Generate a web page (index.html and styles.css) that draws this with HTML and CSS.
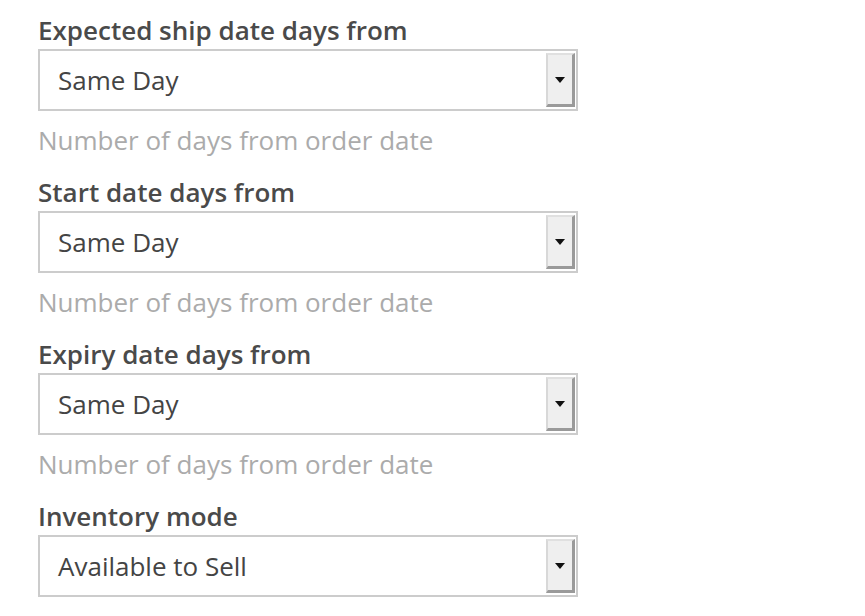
FILE: index.html
```html
<!DOCTYPE html>
<html>
<head>
<meta charset="utf-8">
<link rel="stylesheet" href="styles.css">
</head>
<body>
<div class="form">
  <div class="field">
    <div class="label">Expected ship date days from</div>
    <div class="select"><span class="value">Same Day</span><span class="btn"><span class="arrow"></span></span></div>
    <div class="help">Number of days from order date</div>
  </div>
  <div class="field">
    <div class="label">Start date days from</div>
    <div class="select"><span class="value">Same Day</span><span class="btn"><span class="arrow"></span></span></div>
    <div class="help">Number of days from order date</div>
  </div>
  <div class="field">
    <div class="label">Expiry date days from</div>
    <div class="select"><span class="value">Same Day</span><span class="btn"><span class="arrow"></span></span></div>
    <div class="help">Number of days from order date</div>
  </div>
  <div class="field">
    <div class="label">Inventory mode</div>
    <div class="select"><span class="value">Available to Sell</span><span class="btn"><span class="arrow"></span></span></div>
  </div>
</div>
</body>
</html>
```

FILE: styles.css
```css
html, body {
  margin: 0;
  padding: 0;
  background: #fff;
}
body {
  font-family: "Open Sans", "Liberation Sans", sans-serif;
  overflow: hidden;
}
.form {
  padding: 13px 0 0 38px;
  display: flex;
  flex-direction: column;
  gap: 18px;
}
.field {
  display: flex;
  flex-direction: column;
  width: 540px;
}
.label {
  font-size: 26px;
  line-height: 34px;
  font-weight: 600;
  color: #4a4a4a;
  margin-bottom: 2px;
}
.select {
  box-sizing: border-box;
  height: 62px;
  border: 2px solid #cccccc;
  background: #fff;
  display: flex;
  align-items: stretch;
  padding: 2px 1px 2px 0;
}
.value {
  flex: 1;
  display: flex;
  align-items: center;
  padding-left: 18px;
  font-size: 26px;
  color: #444;
}
.btn {
  box-sizing: border-box;
  width: 29px;
  background: #efefef;
  border-top: 2px solid #e0e0e0;
  border-left: 2px solid #d8d8d8;
  border-right: 3px solid #9a9a9a;
  border-bottom: 3px solid #9a9a9a;
  display: flex;
  align-items: center;
  justify-content: center;
}
.arrow {
  width: 0;
  height: 0;
  border-left: 5px solid transparent;
  border-right: 5px solid transparent;
  border-top: 6px solid #111;
}
.help {
  margin-top: 12px;
  font-size: 26px;
  line-height: 34px;
  color: #ababab;
}
```
